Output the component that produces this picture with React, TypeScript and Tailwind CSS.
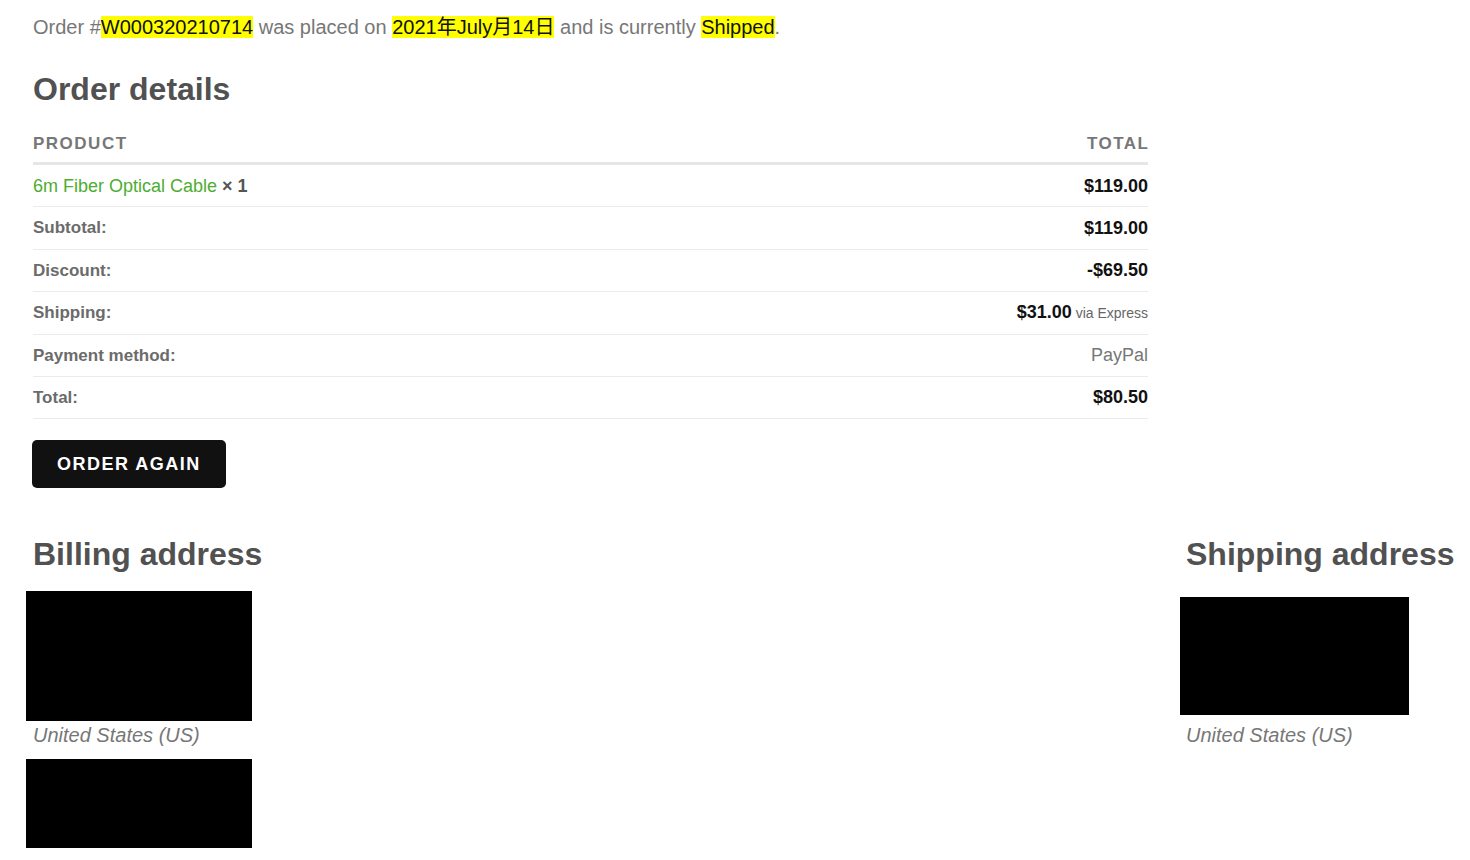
import React from 'react';

const rows = [
  { label: 'Subtotal:', value: <span className="font-bold text-[18px] text-[#111]">$119.00</span> },
  { label: 'Discount:', value: <span className="font-bold text-[18px] text-[#111]">-$69.50</span> },
  {
    label: 'Shipping:',
    value: (
      <span>
        <span className="font-bold text-[18px] text-[#111]">$31.00</span>
        <span className="text-[14px] text-[#666]">&nbsp;via Express</span>
      </span>
    ),
  },
  { label: 'Payment method:', value: <span className="text-[18px] text-[#777]">PayPal</span> },
  { label: 'Total:', value: <span className="font-bold text-[18px] text-[#111]">$80.50</span> },
];

const Mark = ({ children }: { children: React.ReactNode }) => (
  <span className="bg-[#ffff00] text-[#111]">{children}</span>
);

export default function App() {
  return (
    <div className="min-h-[860px] bg-white px-[33px] pt-[13px] font-['Liberation_Sans','Noto_Sans_CJK_SC',Arial,sans-serif]">
      <p className="text-[20px] leading-[28px] text-[#777]">
        Order #<Mark>W000320210714</Mark> was placed on <Mark>2021年July月14日</Mark> and is currently{' '}
        <Mark>Shipped</Mark>.
      </p>

      <h2 className="mt-[29px] text-[32px] font-bold leading-[38.4px] text-[#515151]">Order details</h2>

      <div className="w-[1115px]">
        <div className="mt-[24px] flex justify-between border-b-[3px] border-[#e6e6e6] pb-[6px] text-[17px] font-bold uppercase leading-[24px] tracking-[1.5px] text-[#777]">
          <span>Product</span>
          <span className="mr-[-1.5px]">Total</span>
        </div>

        <div className="flex h-[42px] items-center justify-between border-b border-[#ebebeb] pt-[1px]">
          <span className="text-[18px]">
            <span className="text-[#4cad31]">6m Fiber Optical Cable</span>
            <span className="font-bold text-[#555]">&nbsp;× 1</span>
          </span>
          <span className="text-[18px] font-bold text-[#111]">$119.00</span>
        </div>

        {rows.map(r => (
          <div key={r.label} className="flex h-[42.4px] items-center justify-between border-b border-[#ebebeb]">
            <span className="text-[17px] font-bold text-[#6b6b6b]">{r.label}</span>
            {r.value}
          </div>
        ))}
      </div>

      <button className="-ml-[1px] mt-[21px] h-[48px] rounded-[5px] bg-[#111] px-[25px] text-[18px] font-bold uppercase tracking-[1.5px] text-white">
        Order again
      </button>

      <div className="mt-[47px] flex">
        <div className="w-[1153px] shrink-0">
          <h2 className="text-[32px] font-bold leading-[38.4px] text-[#515151]">Billing address</h2>
          <div className="-ml-[7px] mt-[17px] h-[130px] w-[226px] bg-black" />
          <p className="text-[20px] italic leading-[28px] text-[#777]">United States (US)</p>
          <div className="-ml-[7px] mt-[10px] h-[89px] w-[226px] bg-black" />
        </div>
        <div className="shrink-0">
          <h2 className="whitespace-nowrap text-[32px] font-bold leading-[38.4px] text-[#515151]">Shipping address</h2>
          <div className="-ml-[6px] mt-[23px] h-[118px] w-[229px] bg-black" />
          <p className="mt-[6px] text-[20px] italic leading-[28px] text-[#777]">United States (US)</p>
        </div>
      </div>
    </div>
  );
}
